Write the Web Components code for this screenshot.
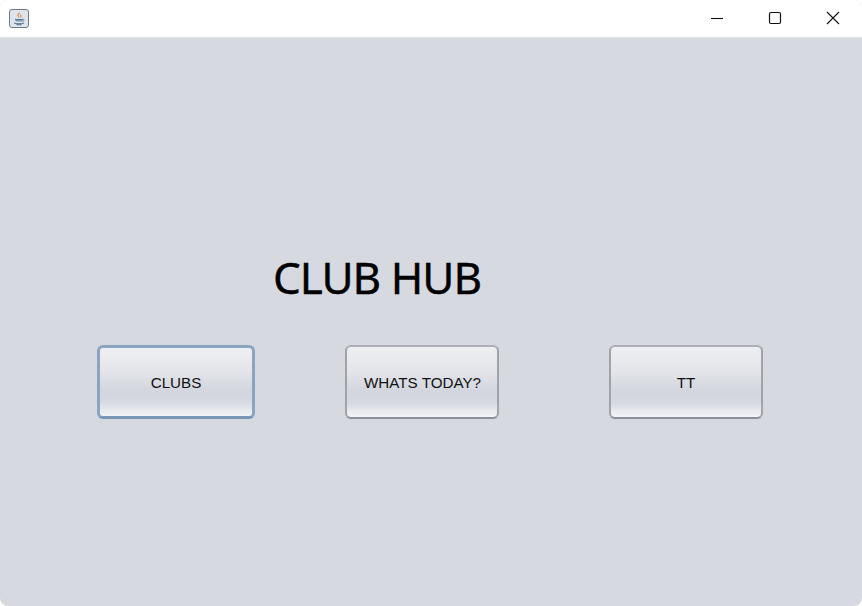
<!DOCTYPE html>
<html>
<head>
<meta charset="utf-8">
<title>Club Hub</title>
<style>
html, body { margin: 0; height: 100%; background: #fff; overflow: hidden; }
</style>
</head>
<body>
<app-window>
  <hub-title slot="title">CLUB HUB</hub-title>
  <hub-button focused style="width:158px">CLUBS</hub-button>
  <hub-button style="width:154px;margin-left:90px;padding-left:1px">WHATS TODAY?</hub-button>
  <hub-button style="width:154px;margin-left:110px">TT</hub-button>
</app-window>
<script>
class AppWindow extends HTMLElement {
  constructor() {
    super()
    this.attachShadow({mode: 'open'}).innerHTML = `
    <style>
    :host { display: flex; flex-direction: column; width: 862px; height: 606px; background: #d6d9e0; border-radius: 8px; overflow: hidden; }
    .bar { display: flex; align-items: center; height: 37px; flex: none; background: #fff; border-bottom: 1px solid #dfe1e6; }
    .logo { margin-left: 9px; margin-top: -1px; display: block; }
    .controls { margin-left: auto; display: flex; margin-top: -2px; }
    .controls button { all: unset; display: flex; align-items: center; justify-content: center; width: 58px; height: 37px; }
    .main { flex: 1; display: flex; flex-direction: column; padding-top: 211px; }
    .title { padding-left: 273px; }
    .row { display: flex; padding-left: 97px; margin-top: 40px; }
    </style>
    <div class="bar">
      <svg class="logo" width="20" height="19" viewBox="0 0 20 19">
        <rect x="0.5" y="0.5" width="19" height="18" rx="2.5" fill="#dfe4ec" stroke="#6f7a88"/>
        <path d="M10.5 3c1.2 1.6-1.8 2.6-.8 4.6.3.6.7 1 .9 1.4-1.8-1.2-2.8-2.2-2-3.6.6-1 1.8-1.4 1.9-2.4z" fill="#e0782a"/>
        <path d="M12.4 5.6c-.9.6-1.6 1-1.1 2 .1.3.3.6.2 1 .7-.6 1.1-1 .9-1.7-.1-.4-.2-.8 0-1.3z" fill="#e0782a"/>
        <path d="M6 10.2c1.6.5 6.2.5 8 0M6.6 11.6c1.4.4 5.4.4 6.8 0M5 14c2.4 1 7.6 1 10 0M7.4 15.6c1.5.3 3.7.3 5.2 0" fill="none" stroke="#4a7390" stroke-width="1"/>
        <path d="M14 10.4c1.4-.3 1.8 1.5-.6 2" fill="none" stroke="#4a7390" stroke-width=".8"/>
      </svg>
      <div class="controls">
        <button aria-label="Minimize"><svg width="14" height="14" viewBox="0 0 14 14"><path d="M1 7.5h12" stroke="#111" stroke-width="1.1"/></svg></button>
        <button aria-label="Maximize"><svg width="14" height="14" viewBox="0 0 14 14"><rect x="1.5" y="1.5" width="11" height="11" rx="1.5" fill="none" stroke="#111" stroke-width="1.2"/></svg></button>
        <button aria-label="Close"><svg width="14" height="14" viewBox="0 0 14 14"><path d="M1 1l12 12M13 1L1 13" stroke="#111" stroke-width="1.1"/></svg></button>
      </div>
    </div>
    <div class="main">
      <div class="title"><slot name="title"></slot></div>
      <div class="row"><slot></slot></div>
    </div>
    `
  }
}

class HubTitle extends HTMLElement {
  constructor() {
    super()
    this.attachShadow({mode: 'open'}).innerHTML = `
    <style>
    :host { display: block; font: 44px/56px "Noto Sans", sans-serif; color: #000; letter-spacing: -1px; -webkit-text-stroke: 0.4px #000; }
    </style>
    <slot></slot>
    `
  }
}

class HubButton extends HTMLElement {
  constructor() {
    super()
    this.attachShadow({mode: 'open'}).innerHTML = `
    <style>
    :host { display: flex; flex: none; height: 74px; box-sizing: border-box; align-items: center; justify-content: center;
      border: 2px solid #a0a3aa; border-top-color: #acafb5; border-bottom-color: #8b8f97; border-radius: 6px;
      background: linear-gradient(#eeeff3 0%, #e3e5ea 35%, #d3d6de 62%, #d6d9e1 80%, #e8eaef 92%, #f1f3f6 100%);
      font: 15.2px "Liberation Sans", Arial, sans-serif; color: #111; }
    :host([focused]) { border: 3px solid #8aa5c2; border-bottom-color: #7a97b6; }
    </style>
    <slot></slot>
    `
  }
}

customElements.define('app-window', AppWindow)
customElements.define('hub-title', HubTitle)
customElements.define('hub-button', HubButton)
</script>
</body>
</html>
